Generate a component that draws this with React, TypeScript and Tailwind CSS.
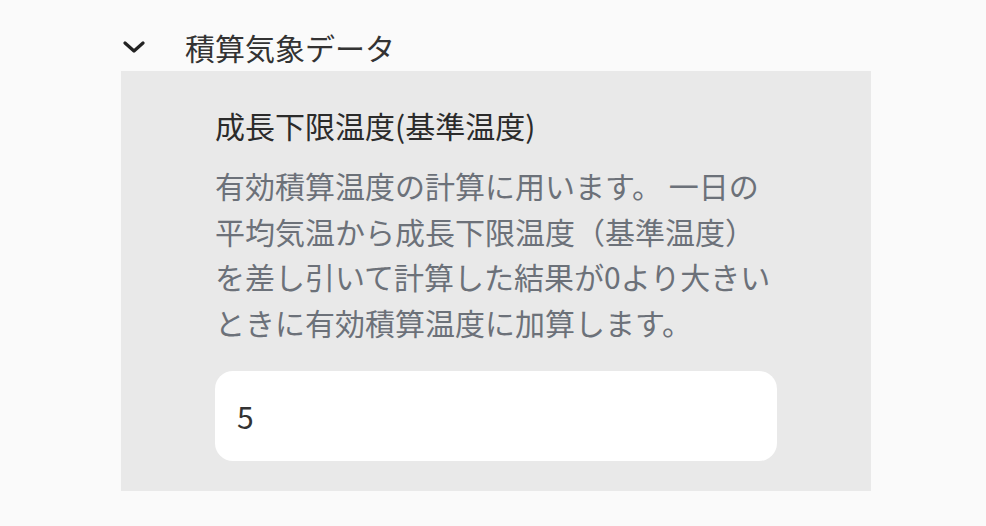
const font = { fontFamily: '"Noto Sans CJK JP", "Noto Sans", sans-serif' };

export default function App() {
  return (
    <div className="min-h-[526px] w-full bg-[#fafafa]" style={font}>
      <div className="ml-[121px] w-[750px] pt-[23px]">
        {/* accordion header */}
        <div className="flex h-[48px] items-center">
          <svg width="24" height="12" viewBox="0 0 24 12" className="ml-[1px] text-[#222]">
            <polyline points="3,2 12,10 21,2" fill="none" stroke="currentColor" strokeWidth="3.2" strokeLinecap="round" strokeLinejoin="round" />
          </svg>
          <span className="ml-[39px] text-[30px] leading-none text-[#333]">積算気象データ</span>
        </div>

        {/* accordion body */}
        <div className="bg-[#e9e9e9] pl-[94px] pt-[34px] pb-[30px]">
          <div className="w-[562px]">
            <p className="text-[30px] leading-[40px] text-[#2b2b2b]">成長下限温度(基準温度)</p>
            <p className="mt-[18px] text-[30px] leading-[45.5px] text-[#6c7179]">
              有効積算温度の計算に用います。 一日の平均気温から成長下限温度（基準温度）を差し引いて計算した結果が0より大きいときに有効積算温度に加算します。
            </p>
            <div className="mt-[26px] flex h-[90px] items-center rounded-[18px] bg-white px-[22px]">
              <span className="text-[30px] text-[#333]">5</span>
            </div>
          </div>
        </div>
      </div>
    </div>
  );
}
